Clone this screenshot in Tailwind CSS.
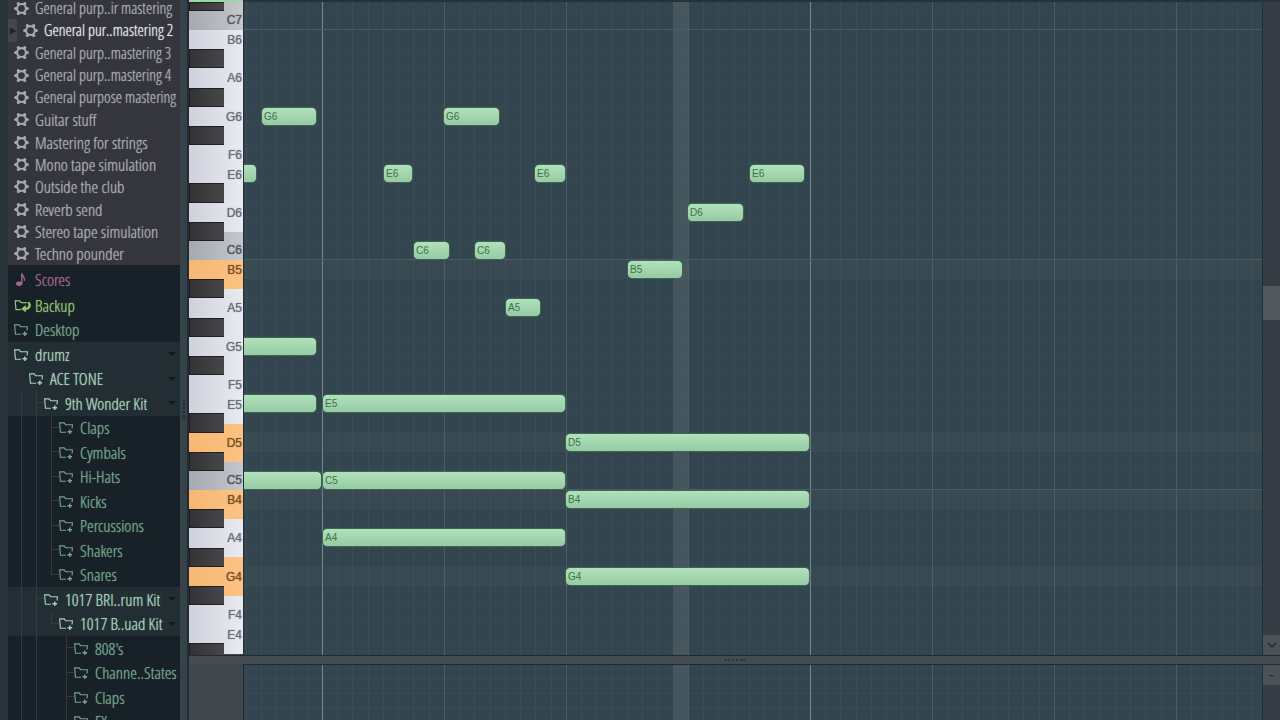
<!DOCTYPE html>
<html lang="en">
<head>
    <meta charset="UTF-8">
    <meta name="viewport" content="width=device-width, initial-scale=1.0">
    <title>Piano roll</title>
    <script src="https://cdn.jsdelivr.net/npm/@tailwindcss/browser@4"></script>
</head>
<body class="flex h-screen overflow-hidden bg-[#29343a]">

<!-- Icons -->
<svg class="hidden">
    <symbol id="gear" viewBox="0 0 16 16">
        <circle cx="8" cy="8" r="4.7" fill="none" stroke="currentColor" stroke-width="2.2"/>
        <g fill="currentColor"><circle cx="1.8" cy="8" r="1.7"/><circle cx="14.2" cy="8" r="1.7"/><circle cx="4.6" cy="2.7" r="1.7"/><circle cx="11.4" cy="2.7" r="1.7"/><circle cx="4.6" cy="13.3" r="1.7"/><circle cx="11.4" cy="13.3" r="1.7"/></g>
    </symbol>
    <symbol id="folder" viewBox="0 0 16 16">
        <path d="M7.500 13H1.500L.7 3h4.800l1.500 2H14.300l-.4 4" fill="none" stroke="currentColor" stroke-width="1.2"/>
        <path d="M11.500 10v5M9 12.500h5" fill="none" stroke="currentColor" stroke-width="1.500"/>
    </symbol>
    <symbol id="backup" viewBox="0 0 18 16">
        <path d="M7 12.500H1.500L.7 3h4.800l1.500 2H13" fill="none" stroke="currentColor" stroke-width="1.300"/>
        <path d="M14.500 4.500c3 3 1.500 7-3 7" fill="none" stroke="currentColor" stroke-width="2.500"/>
        <path d="M7 11.500l5-4v8z" fill="currentColor"/>
    </symbol>
    <symbol id="note" viewBox="0 0 16 16">
        <ellipse cx="5.500" cy="12.500" rx="3.400" ry="2.300" fill="currentColor"/>
        <path d="M8.300 12.500V1.500c.5 3 3.900 4 2.700 8" fill="none" stroke="currentColor" stroke-width="1.500"/>
    </symbol>
</svg>

<!-- Browser -->
<aside class="flex w-[189px] shrink-0 border-l-8 border-[#29343a] bg-[#36424a] font-['Open_Sans_Condensed_Light','Open_Sans_Condensed','Liberation_Sans_Narrow','Open_Sans',sans-serif] text-[17px] leading-none">
    <nav class="w-[172px] shrink-0 overflow-hidden bg-[#172127]">
        <div id="presets" class="-mt-[3px] flex h-[268px] flex-col bg-[#34353d] text-[#a9abb0]"></div>
        <button class="flex h-7 w-full items-center gap-[6px] pl-[6px] text-[#a5668f] [text-shadow:0_0_1px_currentColor]">
            <svg class="size-[15px]"><use href="#note"/></svg>Scores
        </button>
        <div id="tree" class="flex h-[441px] flex-col"></div>
    </nav>
    <div class="flex grow items-center justify-center border-r-2 border-[#222c32]">
        <div class="mt-[100px] h-5 border-l-2 border-dotted border-[#222c32]"></div>
    </div>
</aside>

<!-- Piano roll -->
<main class="flex min-w-0 grow flex-col bg-[#40484e] font-['Liberation_Sans_Narrow','Liberation_Sans',sans-serif]">
    <div class="flex h-[2px] shrink-0 bg-[#26333a]"><div class="w-[54px] bg-[#9bd8a5]"></div></div>
    <section class="flex h-[653px] shrink-0">
        <div class="relative w-[54px] shrink-0 overflow-hidden">
            <div id="whites"></div>
            <div id="blacks" class="absolute top-0 left-0 w-[35px]"></div>
        </div>
        <div class="relative min-w-0 grow overflow-hidden border-l border-[#223038] bg-[#33454e]">
            <div class="absolute inset-0 bg-[linear-gradient(90deg,#3a4c55_1px,transparent_1px_15px,#3a4c55_15px_16px,transparent_16px_30px,#3a4c55_30px_31px,transparent_31px_46px,#3a4c55_46px_47px,transparent_47px)] bg-[size:61px_100%] bg-[position:17px_0]"></div>
            <div class="absolute inset-y-0 left-[429px] w-[15px] bg-[#45565f]"></div>
            <div class="absolute inset-0 bg-[linear-gradient(90deg,#4a5c65_1px,transparent_1px)] bg-[size:122px_100%] bg-[position:78px_0]"></div>
            <div class="absolute inset-0 bg-[linear-gradient(90deg,#76878e_1px,transparent_1px)] bg-[size:488px_100%] bg-[position:78px_0]"></div>
            <div id="rows" class="relative"></div>
        </div>
        <div class="flex w-[18px] shrink-0 flex-col border-l border-[#232e35] bg-[#353c43]">
            <div class="mt-[284px] h-[34px] bg-[#51595e]"></div>
            <button aria-label="Scroll down" class="mt-auto flex h-[20px] items-center justify-center bg-[#4b5358] text-[#222b31]">
                <svg class="size-3" viewBox="0 0 12 12"><path d="M2 4l4 4 4-4" fill="none" stroke="currentColor" stroke-width="1.5"/></svg>
            </button>
        </div>
    </section>
    <div class="flex h-[9px] shrink-0 items-center justify-center border-t border-[#202a30] bg-[#424b50]">
        <div class="w-5 border-t-2 border-dotted border-[#2b353b]"></div>
    </div>
    <section class="flex min-h-0 grow">
        <div class="w-[54px] shrink-0"></div>
        <div class="relative min-w-0 grow border-t border-l border-[#202a30] bg-[#33454e]">
            <div class="absolute inset-0 bg-[linear-gradient(#394b54_1px,transparent_1px)] bg-[size:100%_15px] bg-[position:0_13px]"></div>
            <div class="absolute inset-0 bg-[linear-gradient(90deg,#3a4c55_1px,transparent_1px_15px,#3a4c55_15px_16px,transparent_16px_30px,#3a4c55_30px_31px,transparent_31px_46px,#3a4c55_46px_47px,transparent_47px)] bg-[size:61px_100%] bg-[position:17px_0]"></div>
            <div class="absolute inset-y-0 left-[429px] w-[15px] bg-[#45565f]"></div>
            <div class="absolute inset-0 bg-[linear-gradient(90deg,#4a5c65_1px,transparent_1px)] bg-[size:122px_100%] bg-[position:78px_0]"></div>
            <div class="absolute inset-0 bg-[linear-gradient(90deg,#76878e_1px,transparent_1px)] bg-[size:488px_100%] bg-[position:78px_0]"></div>
        </div>
        <div class="w-[18px] shrink-0 border-t border-l border-[#232e35] bg-[#353c43]">
            <button aria-label="Zoom" class="flex h-5 w-full items-center justify-center bg-[#4b5358] text-[#222b31]">-</button>
        </div>
    </section>
</main>

<script>
    const presets = ['General purp..ir mastering', 'General pur..mastering 2', 'General purp..mastering 3', 'General purp..mastering 4',
        'General purpose mastering', 'Guitar stuff', 'Mastering for strings', 'Mono tape simulation', 'Outside the club',
        'Reverb send', 'Stereo tape simulation', 'Techno pounder'];

    document.getElementById('presets').innerHTML = presets.map((name, i) => `
        <button class="flex flex-1 items-center gap-[6px] whitespace-nowrap [text-shadow:0_0_1px_currentColor] ${i < 5 ? 'text-[16px]' : ''} ${i === 1 ? 'text-[#e6e7ea]' : 'pl-[6px]'}">
            ${i === 1 ? '<span class="flex h-full w-[9px] items-center justify-center bg-[#45454d] text-[8px] text-[#24252b]">&#9654;</span>' : ''}
            <svg class="size-[15px] shrink-0 text-[#a9abb0]"><use href="#gear"/></svg>${name}
        </button>`).join('');

    // guides: one letter per level. | line, + line with tick, L last item, space nothing
    const tree = [
        ['', 'Backup'], ['', 'Desktop'], ['', 'drumz', 1], [' ', 'ACE TONE', 1], ['|+', '9th Wonder Kit', 1],
        ['||+', 'Claps'], ['||+', 'Cymbals'], ['||+', 'Hi-Hats'], ['||+', 'Kicks'], ['||+', 'Percussions'],
        ['||+', 'Shakers'], ['||L', 'Snares'], ['|+', '1017 BRI..rum Kit', 1], ['||L', '1017 B..uad Kit', 1],
        ['|| +', "808's"], ['|| +', 'Channe..States'], ['|| +', 'Claps'], ['|| +', 'FX'],
    ];

    const guide = (g) => `<span class="flex h-full w-[15px] shrink-0 flex-col pl-[7px]">
        <span class="h-1/2 ${g === ' ' ? '' : 'border-l border-[#2d3d41]'} ${g === '+' || g === 'L' ? 'border-b' : ''}"></span>
        <span class="h-1/2 ${g === '|' || g === '+' ? 'border-l border-[#2d3d41]' : ''}"></span></span>`;

    document.getElementById('tree').innerHTML = tree.map(([guides, name, open]) => `
        <button class="relative flex min-h-0 flex-1 items-center whitespace-nowrap pl-[6px] [text-shadow:0_0_1px_currentColor] ${open ? 'bg-[#232e34] text-[#a5d3ba]' : name === 'Backup' ? 'text-[#95c475]' : 'text-[#74a58c]'}">
            ${[...guides].map(guide).join('')}
            <svg class="h-[15px] shrink-0 ${name === 'Backup' ? 'mr-[3px] w-[18px]' : 'mr-[6px] w-[15px]'}"><use href="${name === 'Backup' ? '#backup' : '#folder'}"/></svg>${name}
            ${open ? '<span class="absolute right-1 border-x-4 border-t-4 border-x-transparent border-t-[#10181c]"></span>' : ''}
        </button>`).join('');

    // [left, width, show label]
    const notes = {
        G6: [[17, 56, 1], [199, 57, 1]],
        E6: [[-8, 21], [139, 30, 1], [290, 32, 1], [505, 56, 1]],
        D6: [[443, 57, 1]],
        C6: [[169, 37, 1], [230, 32, 1]],
        B5: [[383, 56, 1]],
        A5: [[261, 36, 1]],
        G5: [[-8, 81]],
        E5: [[-8, 81], [78, 244, 1]],
        D5: [[321, 245, 1]],
        C5: [[-8, 86], [78, 244, 1]],
        B4: [[321, 245, 1]],
        A4: [[78, 244, 1]],
        G4: [[321, 245, 1]],
    };
    const active = ['B5', 'D5', 'B4', 'G4'];

    const octave = [['B', 'h-[19px]'], ['A#', 'h-[19px]'], ['A', 'h-[20px]'], ['G#', 'h-[19px]'], ['G', 'h-[19px]'], ['F#', 'h-[19px]'],
        ['F', 'h-[19px]'], ['E', 'h-[19px]'], ['D#', 'h-[20px]'], ['D', 'h-[19px]'], ['C#', 'h-[19px]'], ['C', 'h-[19px]']];
    const rows = [['C#7', 'h-[9px]'], ['C7', 'h-[19px]']];
    [6, 5, 4].forEach(o => octave.forEach(([n, h]) => rows.push([n + o, h])));

    document.getElementById('rows').innerHTML = rows.map(([n, h]) => `
        <div class="relative ${h} border-b ${/^C\d/.test(n) ? 'border-[#4a5c65]' : 'border-[#526a7426]'} ${active.includes(n) ? 'bg-[#5a6a7422]' : ''}">
            ${(notes[n] || []).map(([x, w, label]) => `<div class="absolute top-0 h-[19px] rounded-[5px] border border-[#3d6653] bg-linear-to-b from-[#b0e2bb] to-[#97c9a2] pl-[2px] text-[10px] leading-[17px] text-[#39734a]" style="left:${x}px;width:${w}px">${label ? n : ''}</div>`).join('')}
        </div>`).join('');

    document.getElementById('blacks').innerHTML = rows.map(([n, h]) =>
        `<div class="${h} ${n.includes('#') ? 'border border-[#1f1f22] border-r-[#45464a] bg-linear-to-r from-[#333336] to-[#47474a]' : ''}"></div>`).join('');

    const keys = [['B', 'h-[29px] items-start'], ['A', 'h-[38px] items-center'], ['G', 'h-[39px] items-center'], ['F', 'h-[29px] items-end'],
        ['E', 'h-[29px] items-start'], ['D', 'h-[38px] items-center'], ['C', 'h-[28px] items-end']];
    const whites = [['C7', 'h-[28px] items-end']];
    [6, 5, 4].forEach(o => keys.forEach(([n, h]) => whites.push([n + o, h])));

    // E4 is the lowest key in view
    document.getElementById('whites').innerHTML = whites.slice(0, -2).map(([n, h]) => {
        const color = active.includes(n) ? 'bg-linear-to-r from-[#f6b672] to-[#fcc384] text-[#7a5226]'
            : n[0] === 'C' ? 'bg-linear-to-r from-[#a5a9b0] to-[#c4c7cc] text-[#55585e]'
            : 'bg-linear-to-r from-[#cfd2db] to-[#e9ebf1] text-[#6d7078]';
        return `<div class="flex ${h} justify-end pr-px text-[12px] leading-[20px] [text-shadow:0_0_1px_currentColor] ${color}">${n}</div>`;
    }).join('');
</script>

</body>
</html>
